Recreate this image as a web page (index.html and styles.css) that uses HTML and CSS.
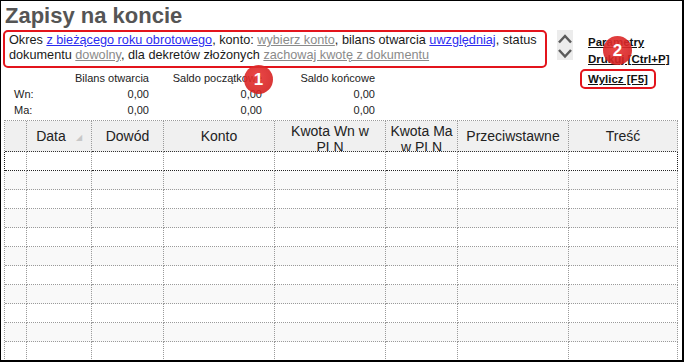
FILE: index.html
```html
<!DOCTYPE html>
<html lang="pl">
<head>
<meta charset="utf-8">
<title>Zapisy na koncie</title>
<link rel="stylesheet" href="styles.css">
</head>
<body>
<div class="frame">
  <h1 class="title">Zapisy na koncie</h1>
  <div class="top">
    <div class="left">
      <div class="desc">
        Okres <a class="lnk blue">z bieżącego roku obrotowego</a>, konto: <a class="lnk grey">wybierz konto</a>, bilans otwarcia <a class="lnk blue">uwzględniaj</a>, status dokumentu <a class="lnk grey">dowolny</a>, dla dekretów złożonych <a class="lnk grey">zachowaj kwotę z dokumentu</a>
      </div>
      <div class="balance">
        <span></span><span class="r">Bilans otwarcia</span><span class="r">Saldo początkowe</span><span class="r">Saldo końcowe</span>
        <span>Wn:</span><span class="r">0,00</span><span class="r">0,00</span><span class="r">0,00</span>
        <span>Ma:</span><span class="r">0,00</span><span class="r">0,00</span><span class="r">0,00</span>
      </div>
    </div>
    <div class="scroller">
      <svg width="16" height="30" viewBox="0 0 16 30">
        <polyline points="2,12.5 8,6 14,12.5" fill="none" stroke="#5a5a5a" stroke-width="2.5"/>
        <polyline points="2,20 8,26.5 14,20" fill="none" stroke="#5a5a5a" stroke-width="2.5"/>
      </svg>
    </div>
    <div class="actions">
      <a class="act">Parametry</a>
      <a class="act">Drukuj [Ctrl+P]</a>
      <a class="act boxed">Wylicz [F5]</a>
    </div>
  </div>
  <div class="grid">
    <div class="row head">
      <div class="c"></div>
      <div class="c"><span>Data</span><span class="sort">◢</span></div>
      <div class="c">Dowód</div>
      <div class="c">Konto</div>
      <div class="c wrap">Kwota Wn w PLN</div>
      <div class="c wrap">Kwota Ma w PLN</div>
      <div class="c">Przeciwstawne</div>
      <div class="c">Treść</div>
    </div>
    <div class="row focus"><div class="c"></div><div class="c"></div><div class="c"></div><div class="c"></div><div class="c"></div><div class="c"></div><div class="c"></div><div class="c"></div></div>
    <div class="row alt"><div class="c"></div><div class="c"></div><div class="c"></div><div class="c"></div><div class="c"></div><div class="c"></div><div class="c"></div><div class="c"></div></div>
    <div class="row"><div class="c"></div><div class="c"></div><div class="c"></div><div class="c"></div><div class="c"></div><div class="c"></div><div class="c"></div><div class="c"></div></div>
    <div class="row alt"><div class="c"></div><div class="c"></div><div class="c"></div><div class="c"></div><div class="c"></div><div class="c"></div><div class="c"></div><div class="c"></div></div>
    <div class="row"><div class="c"></div><div class="c"></div><div class="c"></div><div class="c"></div><div class="c"></div><div class="c"></div><div class="c"></div><div class="c"></div></div>
    <div class="row alt"><div class="c"></div><div class="c"></div><div class="c"></div><div class="c"></div><div class="c"></div><div class="c"></div><div class="c"></div><div class="c"></div></div>
    <div class="row"><div class="c"></div><div class="c"></div><div class="c"></div><div class="c"></div><div class="c"></div><div class="c"></div><div class="c"></div><div class="c"></div></div>
    <div class="row alt"><div class="c"></div><div class="c"></div><div class="c"></div><div class="c"></div><div class="c"></div><div class="c"></div><div class="c"></div><div class="c"></div></div>
    <div class="row"><div class="c"></div><div class="c"></div><div class="c"></div><div class="c"></div><div class="c"></div><div class="c"></div><div class="c"></div><div class="c"></div></div>
    <div class="row alt"><div class="c"></div><div class="c"></div><div class="c"></div><div class="c"></div><div class="c"></div><div class="c"></div><div class="c"></div><div class="c"></div></div>
    <div class="row"><div class="c"></div><div class="c"></div><div class="c"></div><div class="c"></div><div class="c"></div><div class="c"></div><div class="c"></div><div class="c"></div></div>
  </div>
  <div class="badge b1">1</div>
  <div class="badge b2">2</div>
</div>
</body>
</html>
```

FILE: styles.css
```css
* { box-sizing: border-box; }
html, body { margin: 0; padding: 0; background: #fff; }
.frame {
  position: relative;
  width: 684px;
  height: 362px;
  border-style: solid;
  border-color: #000;
  border-width: 1px 2px 2px 1px;
  overflow: hidden;
  background: #fff;
  font-family: "Liberation Sans", Arial, sans-serif;
  color: #1e1e1e;
}
.title {
  margin: 0;
  height: 29px;
  padding-left: 4px;
  font-size: 22px;
  line-height: 29px;
  font-weight: bold;
  color: #555;
}
.top {
  display: flex;
  align-items: flex-start;
}
.left {
  margin-left: 2px;
  width: 544px;
}
.desc {
  height: 38px;
  border: 2px solid #e3141c;
  border-radius: 5px;
  padding: 1px 2px 0 4px;
  font-size: 12.7px;
  line-height: 15px;
  color: #1a1a1a;
}
.lnk { text-decoration: underline; }
.lnk.blue { color: #2b2bf0; }
.lnk.grey { color: #8a8a8a; }
.balance {
  display: grid;
  grid-template-columns: 50px 85px 113px 113px;
  grid-auto-rows: 16px;
  padding: 2px 0 0 11px;
  font-size: 11px;
  line-height: 16px;
  color: #222;
}
.balance .r { text-align: right; }
.scroller {
  margin-left: 10px;
  width: 16px;
  height: 30px;
  background: #ececec;
}
.scroller svg { display: block; }
.actions {
  display: flex;
  flex-direction: column;
  align-items: flex-start;
  margin-left: 7px;
  padding-top: 4px;
}
.act {
  font-size: 11.5px;
  font-weight: bold;
  color: #111;
  text-decoration: underline;
  line-height: 17px;
  padding-left: 8px;
}
.act.boxed {
  margin-top: 1px;
  padding: 0 6px;
  line-height: 16px;
  border: 2px solid #e3141c;
  border-radius: 5px;
}
.grid {
  position: absolute;
  left: 3px;
  top: 119px;
  width: 674px;
  border-left: 1px dotted #9a9a9a;
  border-top: 1px dotted #9a9a9a;
}
.row {
  display: grid;
  grid-template-columns: 22px 65px 72px 111px 111px 72px 111px 109px;
  height: 19px;
}
.row.alt { background: #f9f9f9; }
.c {
  border-right: 1px dotted #9a9a9a;
  border-bottom: 1px dotted #9a9a9a;
}
.row.head {
  height: 31px;
  background: #f0f0f0;
}
.head .c {
  display: flex;
  align-items: center;
  justify-content: center;
  text-align: center;
  padding: 0 4px;
  font-size: 14px;
  line-height: 16px;
  color: #222;
  overflow: hidden;
  border-bottom-color: #333;
}
.head .c.wrap {
  align-items: flex-start;
  padding: 2px 2px 0 2px;
}
.sort {
  font-size: 8px;
  color: #c8c8c8;
  margin-left: 10px;
  margin-top: 4px;
}
.row.focus {
  margin-left: -1px;
  border-left: 1px dotted #222;
}
.row.focus .c { border-bottom-color: #222; }
.row.focus .c:last-child { border-right-color: #222; }
.badge {
  position: absolute;
  width: 29px;
  height: 29px;
  border-radius: 50%;
  background: radial-gradient(circle at 45% 40%, rgba(232,52,52,0.9), rgba(205,25,25,0.9));
  color: #fff;
  font-size: 17px;
  font-weight: bold;
  display: flex;
  align-items: center;
  justify-content: center;
  font-family: "Liberation Sans", Arial, sans-serif;
}
.b1 { left: 243px; top: 64px; }
.b2 { left: 602px; top: 35px; }
```
